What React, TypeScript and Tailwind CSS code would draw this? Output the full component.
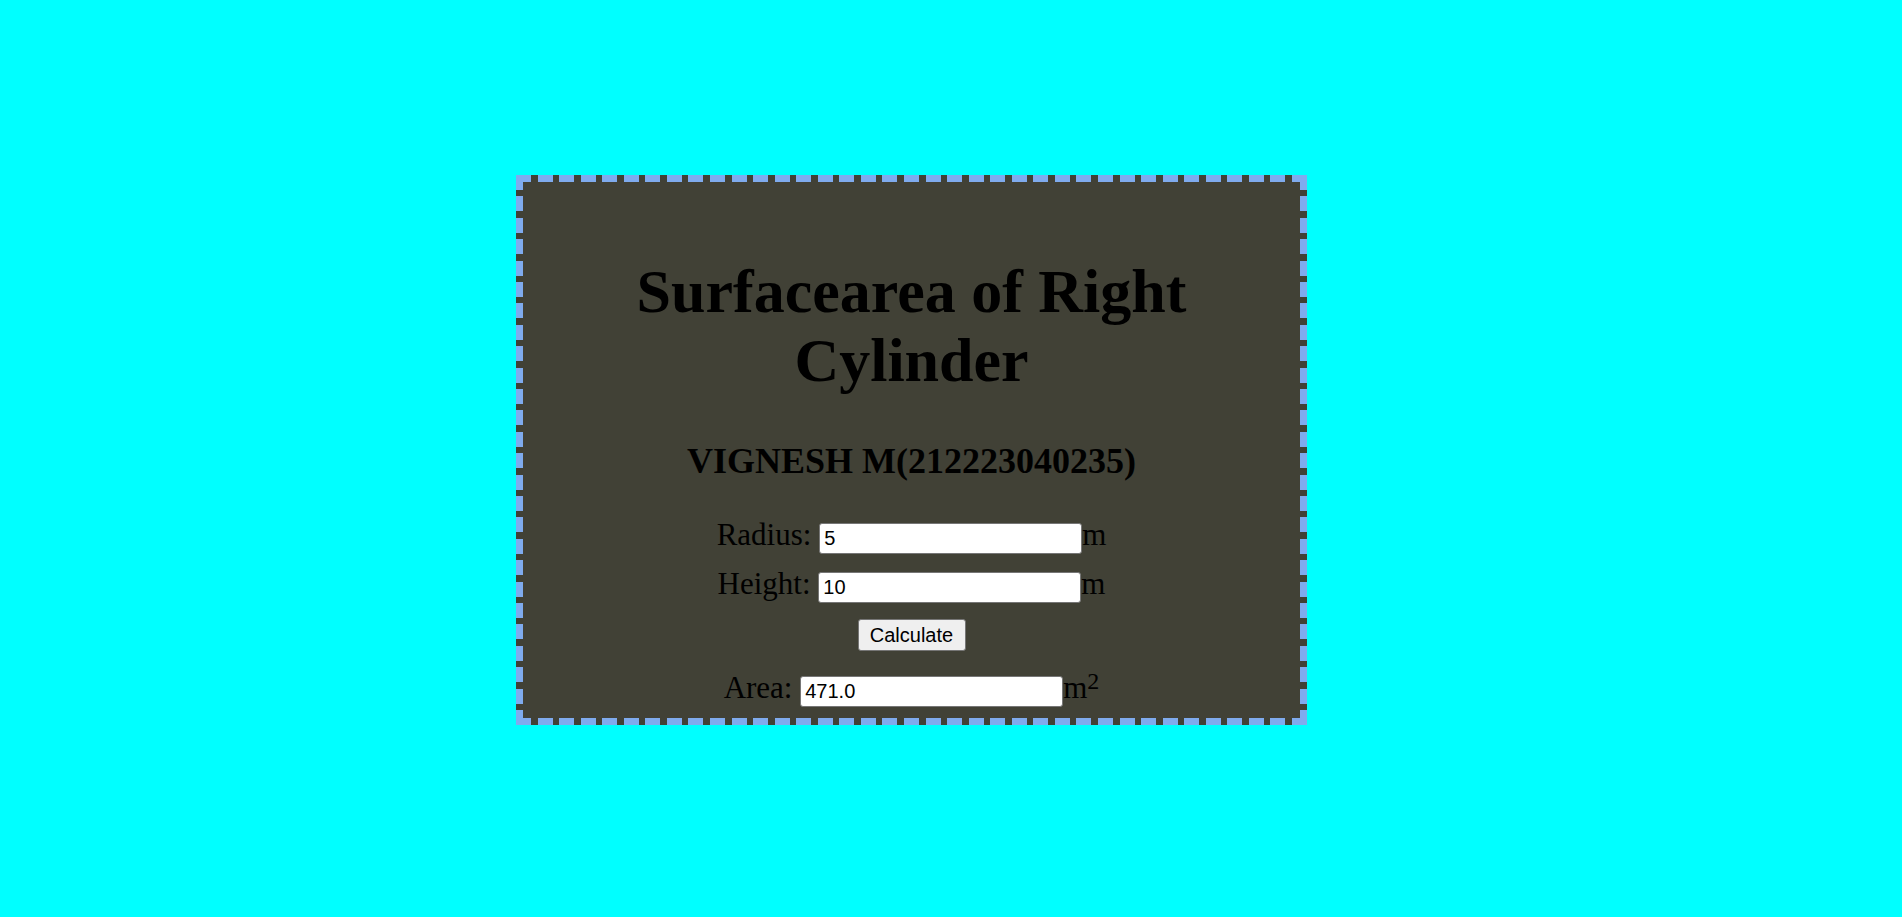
import React, { useState } from 'react'

const App = () => {
  const [radius, setRadius] = useState('5')
  const [height, setHeight] = useState('10')
  const [area, setArea] = useState('471.0')

  // surface area of a right cylinder: 2*pi*r*(r+h), rounded like the original
  function calculate() {
    const r = parseFloat(radius)
    const h = parseFloat(height)
    if (isNaN(r) || isNaN(h)) return
    setArea((2 * 3.14 * r * (r + h)).toFixed(1))
  }

  const inputCls =
    "w-[263px] h-[31px] px-[4px] bg-white border border-[#767676] rounded-[3px] text-[20px] text-black font-['Liberation_Sans',Arial,sans-serif] align-baseline outline-none"

  return (
    <div className="min-h-screen w-full bg-[#00ffff] pt-[175px] font-['Liberation_Serif','Times_New_Roman',serif]">
      {/* dashed frame: long dashes drawn as edge gradients */}
      <div className="ml-[516px] w-[791px] h-[550px] p-[7px] bg-[#414136] bg-no-repeat bg-[image:repeating-linear-gradient(90deg,#7fabee_0_15px,transparent_15px_21.556px),repeating-linear-gradient(90deg,#7fabee_0_15px,transparent_15px_21.556px),repeating-linear-gradient(180deg,#7fabee_0_15px,transparent_15px_21.4px),repeating-linear-gradient(180deg,#7fabee_0_15px,transparent_15px_21.4px)] bg-[length:100%_7px,100%_7px,7px_100%,7px_100%] bg-[position:0_0,0_100%,0_0,100%_0]">
        <div className="h-full text-black text-center pt-[75px]">
          {/* Heading */}
          <h1 className="text-[62px] font-bold leading-[69px]">
            Surfacearea of Right
            <br />
            Cylinder
          </h1>
          <h2 className="mt-[46px] text-[36px] font-bold leading-[40px]">VIGNESH M(212223040235)</h2>

          {/* Form */}
          <div className="mt-[37px] text-[31px] leading-[33px]">
            Radius:{' '}
            <input className={inputCls} value={radius} onChange={(e) => setRadius(e.target.value)} />m
          </div>
          <div className="mt-[13px] text-[31px] leading-[33px]">
            Height:{' '}
            <input className={inputCls} value={height} onChange={(e) => setHeight(e.target.value)} />m
          </div>
          <div className="mt-[16px] flex justify-center">
            <button
              onClick={calculate}
              className="w-[108px] h-[32px] bg-[#efefef] border border-[#767676] rounded-[3px] text-[20px] text-black font-['Liberation_Sans',Arial,sans-serif]"
            >
              Calculate
            </button>
          </div>
          <div className="mt-[20px] text-[31px] leading-[33px]">
            Area:{' '}
            <input className={inputCls} value={area} readOnly />m
            <sup className="text-[24px] top-[-9px]">2</sup>
          </div>
        </div>
      </div>
    </div>
  )
}

export default App
